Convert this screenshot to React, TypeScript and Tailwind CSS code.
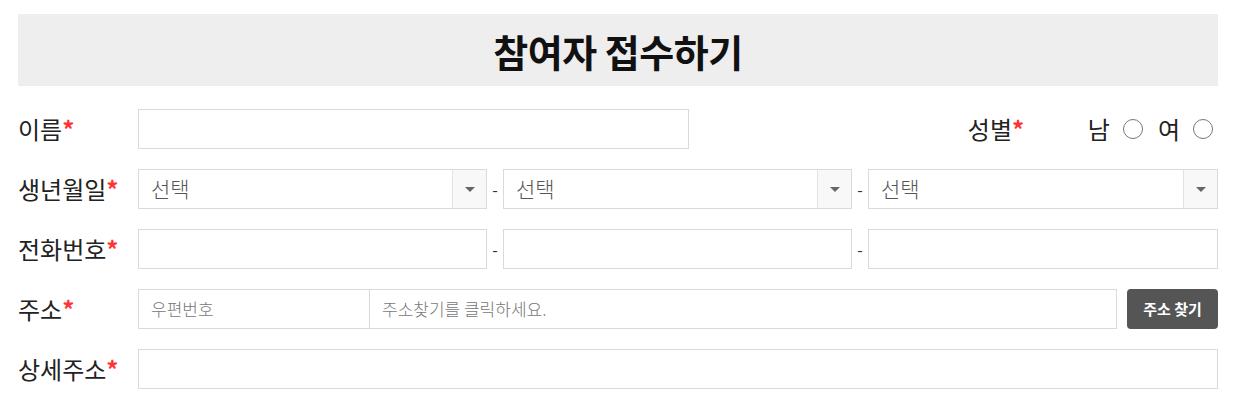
import React from "react";

const font = { fontFamily: '"Noto Sans CJK KR", "Noto Sans", sans-serif' };

function Label({ text }: { text: string }) {
  return (
    <div className="w-[120px] shrink-0 text-[24px] leading-none text-[#222]">
      {text}
      <span className="text-[#ff3333] font-bold">*</span>
    </div>
  );
}

function Select({ last }: { last?: boolean }) {
  return (
    <div className={`flex h-[40px] border border-[#dadada] bg-white ${last ? "flex-1" : "w-[349px]"}`}>
      <div className="flex-1 pl-[12px] flex items-center text-[21px] text-[#555] font-light">선택</div>
      <div className="w-[34px] flex items-center justify-center border-l border-[#e2e2e2] bg-[#f8f8f8]">
        <div className="w-0 h-0 border-l-[5px] border-r-[5px] border-t-[5px] border-l-transparent border-r-transparent border-t-[#666]" />
      </div>
    </div>
  );
}

function Dash() {
  return <div className="w-[16px] text-center text-[16px] text-[#333]">-</div>;
}

function Radio() {
  return <div className="w-[20px] h-[20px] rounded-full border border-[#777] bg-white" />;
}

export default function App() {
  return (
    <div style={font} className="w-[1260px] h-[416px] bg-white pt-[14px] pl-[18px]">
      <div className="w-[1200px]">
        <div className="h-[72px] bg-[#eeeeee] flex items-center justify-center">
          <h1 className="text-[38px] font-bold text-[#111] tracking-[-0.5px]">참여자 접수하기</h1>
        </div>

        <div className="mt-[23px] flex flex-col gap-[20px]">
          <div className="flex items-center h-[40px]">
            <Label text="이름" />
            <div className="h-[40px] w-[551px] border border-[#dadada]" />
            <div className="ml-auto flex items-center">
              <div className="w-[120px] shrink-0 text-[24px] leading-none text-[#222] -ml-[5px]">
                성별<span className="text-[#ff3333] font-bold">*</span>
              </div>
              <span className="text-[24px] text-[#222] leading-none">남</span>
              <div className="ml-[13px]"><Radio /></div>
              <span className="ml-[15px] text-[24px] text-[#222] leading-none">여</span>
              <div className="ml-[13px] mr-[5px]"><Radio /></div>
            </div>
          </div>

          <div className="flex items-center h-[40px]">
            <Label text="생년월일" />
            <Select />
            <Dash />
            <Select />
            <Dash />
            <Select last />
          </div>

          <div className="flex items-center h-[40px]">
            <Label text="전화번호" />
            <div className="h-[40px] w-[349px] border border-[#dadada]" />
            <Dash />
            <div className="h-[40px] w-[349px] border border-[#dadada]" />
            <Dash />
            <div className="h-[40px] flex-1 border border-[#dadada]" />
          </div>

          <div className="flex items-center h-[40px]">
            <Label text="주소" />
            <div className="h-[40px] w-[232px] border border-[#dadada] flex items-center pl-[12px] text-[17px] text-[#777] font-light">우편번호</div>
            <div className="h-[40px] w-[747px] border border-l-0 border-[#dadada] flex items-center pl-[12px] text-[17px] text-[#777] font-light">주소찾기를 클릭하세요.</div>
            <button className="ml-auto h-[40px] w-[91px] rounded-[4px] bg-[#555555] text-white text-[15px] font-bold">주소 찾기</button>
          </div>

          <div className="flex items-center h-[40px]">
            <Label text="상세주소" />
            <div className="h-[40px] flex-1 border border-[#dadada]" />
          </div>
        </div>
      </div>
    </div>
  );
}
